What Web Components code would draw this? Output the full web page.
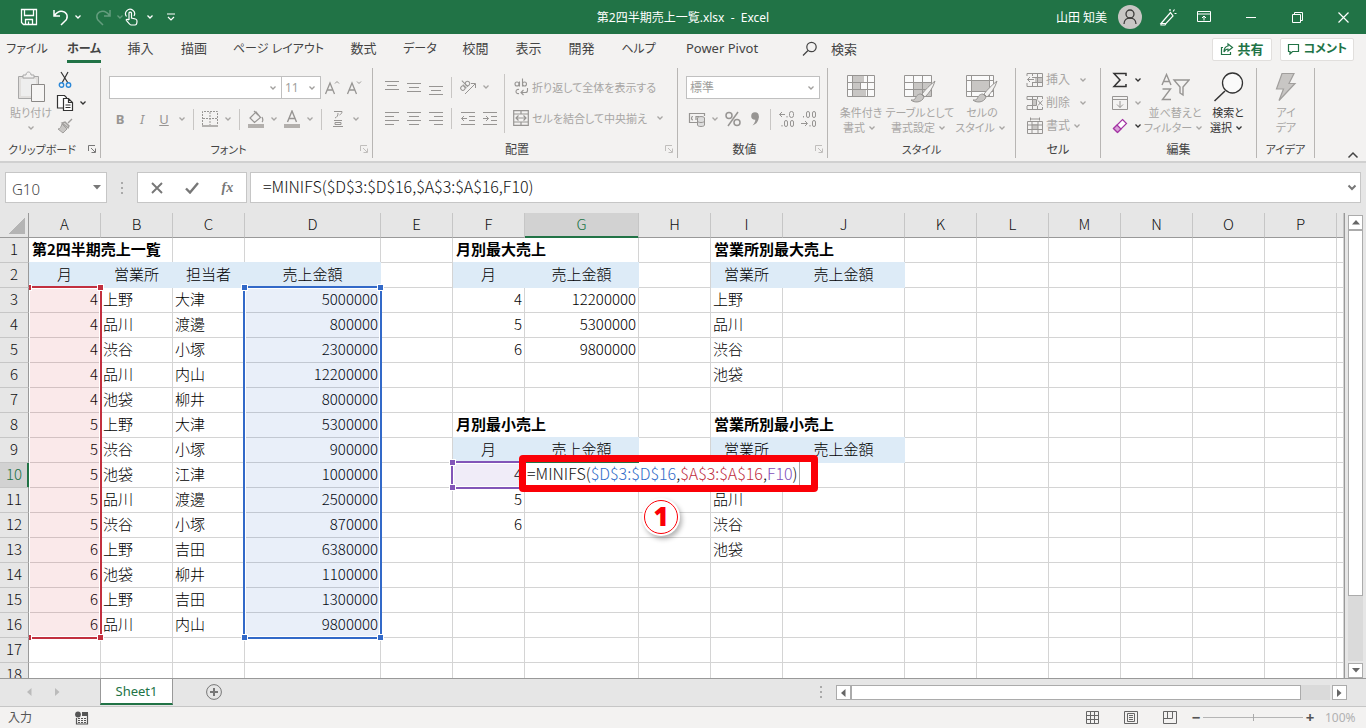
<!DOCTYPE html>
<html lang="ja">
<head>
<meta charset="utf-8">
<title>第2四半期売上一覧.xlsx - Excel</title>
<style>
html,body{margin:0;height:100%}
body{font-family:"Noto Sans","Noto Sans CJK JP",sans-serif;font-size:12px;line-height:15px;color:#444;background:#e6e6e6;overflow:hidden}
xl-app{height:100vh}
</style>
</head>
<body>
<xl-app></xl-app>
<script>
const BASE = `*{box-sizing:border-box}
button,input,select{font:inherit;color:inherit;background:none;border:0;margin:0;padding:0;outline:0;border-radius:0}
button{display:inline-flex;align-items:center;justify-content:center;white-space:nowrap}
a{color:inherit;text-decoration:none}`;

function define(name, html, setup) {
  const tpl = document.createElement('template');
  customElements.define(name, class extends HTMLElement {
    constructor() { super(); this.attachShadow({ mode: 'open' }); }
    connectedCallback() {
      if (this.shadowRoot.childNodes.length) return;
      tpl.innerHTML = `<style>${BASE}</style>` + (typeof html === 'function' ? html(this) : html);
      this.shadowRoot.append(tpl.content.cloneNode(true));
      if (setup) setup(this, this.shadowRoot);
    }
  });
}

/* ---------- icons: [width, height, markup] ---------- */
const S = 'fill="none" stroke="currentColor"';
const brush = '<path d="M33 7C28 11 23 16 20 20l3 3c4-4 8-9 10-16z" fill="#f3f2f1" stroke="#979593"/><path d="M19 20c-4 0-5 3-6 5-1 1-2 1-4 1 3 3 11 3 13-3z" fill="#c8c6c4" stroke="#979593"/>';
const ICONS = {
  save:[18,18,`<path ${S} stroke-width="1.3" d="M1.500 1.500h15v15h-13l-2-2zM4.500 1.500v6h9v-6M5.500 16.500v-5h7v5M8.500 16v-2.500"/>`],
  undo:[18,18,`<path ${S} stroke-width="1.5" d="M2 2v6h6M2.500 7.500C5 4 8 2.500 11 3.500c5 1.500 5.500 7 1.500 10L9 17"/>`],
  redo:[18,18,`<path ${S} stroke-width="1.5" d="M16 2v6h-6M15.500 7.500C13 4 10 2.500 7 3.500 2 5 1.500 10.500 5.500 13.500L9 17"/>`],
  touch:[14,18,`<path ${S} stroke-width="1.200" d="M2.500 8.500A4.500 4.500 0 1 1 10 8M5 12V5a1.300 1.300 0 0 1 2.500 0v5l4 1q1.500.4 1.500 2c0 2-.6 4-2 4H7c-1 0-2.500-2-4.500-4.500C1.500 11 4 11 5 12"/>`],
  custom:[10,8,`<path ${S} stroke-width="1.200" d="M1 1h8M2 4l3 3 3-3"/>`],
  chev:[8,6,`<path ${S} stroke-width="1.300" d="M1.500 1.500L4 4l2.500-2.500"/>`],
  user:[24,24,`<circle cx="12" cy="12" r="12" fill="#c8c6c4"/><g fill="none" stroke="#3b3a39" stroke-width="1.300"><circle cx="12" cy="9" r="4"/><path d="M6 19c0-8 12-8 12 0"/></g>`],
  pen:[18,18,`<path ${S} stroke-width="1.200" d="M2 15.500L11.500 4.500l2.500 3.500-7 7.500zM2 15.500v1.500h4l1-1.500M11 1v2M15.500 1.500L14 3.500M17.500 5.500h-2"/>`],
  disp:[14,12,`<path ${S} d="M.5.5h13v10H.5zM.5 3h13M7 9.500V5M5 7l2-2 2 2"/>`],
  min:[10,10,`<path ${S} d="M0 5.500h10"/>`],
  max:[11,11,`<path ${S} d="M.5 2.500h8v8h-8zM2.500 2.500v-2h8v8h-2"/>`],
  close:[11,11,`<path ${S} stroke-width="1.200" d="M.5.5l10 10M10.500.5l-10 10"/>`],
  search:[16,16,`<circle cx="9.500" cy="6" r="4.700" ${S} stroke-width="1.200"/><path ${S} stroke-width="1.300" d="M6 9.500L1 14.500"/>`],
  share:[14,14,`<path ${S} stroke-width="1.200" d="M3 5.500H1.500v7h9V10M8 2l4.500 3.500L8 9V7C6 7 5 8 4 10c0-3 1-5.500 4-6z"/>`],
  comment:[13,12,`<path ${S} stroke-width="1.200" d="M1.500 1.500h10v7H5.500L3 11V8.500H1.500z"/>`],
  paste:[30,32,`<path d="M2.500 5.500h20v22h-20z" fill="#e1dfdd" stroke="#a8a8a8"/><path d="M5 8h15v17H5z" fill="#eee"/><path d="M7 7V4h3c0-4 5-4 5 0h3v3z" fill="#f3f2f1" stroke="#a8a8a8"/><path d="M15.500 13.500h13v17h-13z" fill="#f6f5f4" stroke="#8a8886"/>`],
  cut:[14,18,`<path ${S} stroke-width="1.200" d="M3 1l7 11M10 1L4 12"/><circle cx="3.500" cy="14" r="2.200" fill="none" stroke="#2b88d8" stroke-width="1.400"/><circle cx="10.500" cy="14" r="2.200" fill="none" stroke="#2b88d8" stroke-width="1.400"/>`],
  copy:[18,18,`<path fill="#fff" stroke="currentColor" stroke-width="1.200" d="M1.500 1.500h7l2 2V14h-9z"/><path fill="#fff" stroke="currentColor" stroke-width="1.200" d="M7.500 4.500h5l4 4v8h-9zM12.500 4.500v4h4M9.500 11h5M9.500 13.500h5"/>`],
  painter:[16,16,`<path d="M15 1l-4 4M8 4l4 4-1 2-6-5z" fill="#d2d0ce" stroke="#a19f9d" stroke-width="1.400"/><path d="M5 6l5 5-4 4-5-4c2 0 3-2 4-5z" fill="#c8c6c4" stroke="#a19f9d"/>`],
  aup:[16,16,`<path ${S} stroke-width="1.300" d="M1.500 14L6 3l4.500 11M3 10h6"/><path ${S} d="M11 3.500l2-2 2 2"/>`],
  adn:[16,16,`<path ${S} stroke-width="1.300" d="M1.500 14L6 3l4.500 11M3 10h6"/><path ${S} d="M11 1.500l2 2 2-2"/>`],
  border:[16,16,`<path ${S} stroke="#b8b6b4" stroke-dasharray="2 1" d="M.5 14V.5h15V14M8 1v13M1 7.500h14"/><path ${S} stroke-width="1.400" d="M0 15h16"/>`],
  fill:[18,18,`<path ${S} stroke-width="1.200" d="M3 8l6-6 4.500 5.500-6 5zM7 1l4 4M15 7c1 2 1 4 0 5"/><path fill="#b3b0ad" d="M1 14h16v4H1z"/>`],
  fcolor:[18,18,`<path ${S} stroke-width="1.400" d="M4.500 12L9 1l4.500 11M6 8.500h6"/><path fill="#b3b0ad" d="M1 14h16v4H1z"/>`],
  ruby:[12,18,`<path ${S} d="M2 1.500h8c0 2-1 2.500-2.500 3.500M6 3c0 3-1 4-3 5M2 10.500h8M1 16.500h10M3 12.500h6v2H3z"/>`],
  top:[16,18,`<path ${S} d="M1 3.500h14M3 7.500h10M1 11.500h14"/>`],
  mid:[16,18,`<path ${S} d="M1 5.500h14M3 9.500h10M1 13.500h14"/>`],
  bot:[16,18,`<path ${S} d="M1 8.500h14M3 12.500h10M1 16.500h14"/>`],
  left:[16,16,`<path ${S} d="M1 2.500h14M1 6.500h9M1 10.500h14M1 14.500h9"/>`],
  center:[16,16,`<path ${S} d="M1 2.500h14M3 6.500h10M1 10.500h14M3 14.500h10"/>`],
  right:[16,16,`<path ${S} d="M1 2.500h14M6 6.500h9M1 10.500h14M6 14.500h9"/>`],
  outdent:[16,16,`<path ${S} d="M1 2.500h14M9 6.500h6M9 10.500h6M1 14.500h14M7 8.500H1.500M4 6L1.500 8.500 4 11"/>`],
  indent:[16,16,`<path ${S} d="M1 2.500h14M9 6.500h6M9 10.500h6M1 14.500h14M1 8.500h5.500M4 6l2.500 2.500L4 11"/>`],
  orient:[18,18,`<g transform="rotate(-45 6 8)" ${S}><circle cx="3" cy="8" r="2.200"/><path d="M5.500 5.500v5M7.500 2v8.500"/><circle cx="9.500" cy="8" r="2.200"/></g><path ${S} d="M6 16L16 6M12 5.500h4.500V10"/>`],
  wrap:[16,18,`<g ${S} stroke-width="1.100"><circle cx="4" cy="6" r="2"/><path d="M6.500 3.500v5M9.500.500v8"/><circle cx="11.500" cy="6" r="2"/><path d="M6 11.500c-4-1-4 5 0 4M14.500 10v2.500q0 2-2 2H8M10.500 12L8 14.500l2.500 2.500"/></g>`],
  merge:[16,16,`<path ${S} stroke-width="1.200" d="M.7.7h14.600v14.600H.7zM1 4h14M1 12h14M8 1v3M8 12v3M3 8h10M5.500 5.500L3 8l2.500 2.500M10.500 5.500L13 8l-2.500 2.500"/>`],
  money:[18,16,`<path ${S} stroke-width="1.200" d="M9 11.500H1.500v-9h15V5M5 5.500c-2 0-2 3.500 0 3.500M8 9V5.500h3"/><ellipse cx="13" cy="7" rx="3.500" ry="1.500" fill="#ddd" stroke="#979593"/><path fill="#ddd" stroke="#979593" d="M9.500 7v7c0 2 7 2 7 0V7M9.500 10c0 2 7 2 7 0"/>`],
  pct:[18,18,`<g ${S} stroke-width="1.500"><circle cx="5" cy="5.500" r="3"/><circle cx="13" cy="12.500" r="3"/><path d="M14 2L4 16"/></g>`],
  comma:[10,16,`<circle cx="5" cy="5" r="3.800" fill="currentColor"/><path fill="currentColor" d="M8.800 5c0 5-2 8-6.300 9.500C5 12 6 9 5 7z"/>`],
  inc:[18,18,`<path ${S} d="M7 4.500H1.500M4 2L1.500 4.500 4 7"/><g ${S}><rect x="11.500" y="1.500" width="4" height="6" rx="2"/><rect x="6.500" y="10.500" width="3" height="6" rx="1.500"/><rect x="12.500" y="10.500" width="3" height="6" rx="1.500"/><path d="M4 15v1.500M9 6v1.500"/></g>`],
  dec:[18,18,`<g ${S}><path d="M1 13.500h6M5 11l2.500 2.500L5 16"/><rect x="6.500" y="1.500" width="3" height="6" rx="1.500"/><rect x="12.500" y="1.500" width="3" height="6" rx="1.500"/><rect x="12.500" y="10.500" width="3" height="6" rx="1.500"/><path d="M3.500 6v1.500M10 15v1.500"/></g>`],
  cond:[30,28,`<path fill="#fafafa" stroke="#979593" d="M1.500 2.500h27v21h-27z"/><path fill="#c8c6c4" d="M7 3h11v6H7zM7 10h7v6H7zM7 17h13v6H7z"/><path fill="none" stroke="#979593" d="M6.500 3v20M14.500 10v6M21.500 3v20M2 9.500h26M2 16.500h26"/>`],
  tblfmt:[36,32,`<path fill="#fafafa" stroke="#979593" d="M2.500 4.500h27v21h-27z"/><path fill="#c8c6c4" d="M12 11h17v14H12z"/><path fill="none" stroke="#979593" d="M11.500 5v20M20.500 5v20M3 11.500h26M3 18.500h26"/><g transform="translate(0 3)">${brush}</g>`],
  cellfmt:[36,32,`<path fill="#fafafa" stroke="#979593" d="M2.500 4.500h27v21h-27z"/><path fill="#c8c6c4" d="M8 10h18v11H8z"/><path fill="none" stroke="#979593" d="M7.500 5v20M25.500 5v20M3 9.500h26M3 20.500h26"/><g transform="translate(0 3)">${brush}</g>`],
  cins:[18,16,`<path fill="#c8c6c4" d="M9 5h8v5H9z"/><path ${S} d="M1 4V1.500h15.500v13H1V11M6.500 1.500V4M11.500 1.500v13M6.500 11v3.500M6 5.500h10M6 10.500h10M8 7.500H1.500M4 5L1.500 7.500 4 10"/>`],
  cdel:[18,16,`<path fill="#c8c6c4" d="M6 5h5v5H6z"/><path ${S} d="M1 4.500V1.500h15.500V4M1 11v3.500h15.500V12M1 4.500h9.500v6H1M6.500 1.500v13M11.500 1.500v3M11.500 11v3M12 5.500l4.500 5M16.500 5.500l-4.500 5"/>`],
  cfmt:[18,18,`<path fill="#c8c6c4" d="M6 7h6v5H6z"/><path ${S} d="M1.500 4.500h15v12h-15zM6 4.500v12M12 4.500v12M2 8h14M2 12.500h14M4.500.5v3M13.500.5v3M4.500 2h9"/>`],
  sum:[16,16,`<path ${S} stroke-width="1.500" d="M14 4V1.500H2L8 8l-6 6.500h12V12"/>`],
  down:[16,14,`<path ${S} d="M.5.5h15v13H.5zM.5 3.500h15M8 5v6.500M5 8.500l3 3 3-3"/>`],
  erase:[16,16,`<path fill="#fff" stroke="#a333a3" stroke-width="1.200" d="M10.500 1.500l4 4-9 9-4-4z"/><path fill="#d9a0d9" stroke="#a333a3" stroke-width="1.200" d="M5 7l4 4-3.500 3.500-4-4z"/>`],
  sort:[30,30,`<g ${S} stroke-width="1.400"><path d="M2 13L6.500 2.500 11 13M3.500 9.500h6M2.500 17h8l-8 10.500h8.500"/><path d="M14 8h15l-6 7v8l-3-2v-6z"/></g>`],
  find:[32,32,`<circle cx="20.500" cy="12" r="10" fill="#fafafa" stroke="currentColor" stroke-width="1.300"/><path ${S} stroke-width="1.500" d="M13 20L2.500 30"/>`],
  bolt:[26,30,`<path fill="#c8c6c4" stroke="#a19f9d" stroke-width="1.200" d="M9 1.500h12l-5 10h6L6 28.500 10.500 17H3.500z"/>`],
  launch:[9,9,`<path ${S} d="M.5 6V.5H7M3 3l4 4M7.500 3.500v4h-4"/>`],
  caret:[12,8,`<path ${S} stroke-width="1.500" d="M1.500 6.500L6 2l4.500 4.500"/>`],
  tri:[8,5,`<path fill="currentColor" d="M0 0h8L4 4.500z"/>`],
  triu:[8,5,`<path fill="currentColor" d="M0 4.500h8L4 0z"/>`],
  tril:[5,8,`<path fill="currentColor" d="M4.500 0v8L0 4z"/>`],
  trir:[5,8,`<path fill="currentColor" d="M0 0v8l4.500-4z"/>`],
  dots:[3,12,`<path fill="#aaa" d="M0 0h2v2H0zM0 5h2v2H0zM0 10h2v2H0z"/>`],
  cancel:[12,12,`<path ${S} stroke-width="1.900" d="M1 1l10 10M11 1L1 11"/>`],
  ok:[14,12,`<path ${S} stroke-width="2.400" d="M1 6.500l4 4L13 1"/>`],
  bigchev:[10,7,`<path ${S} stroke-width="2" d="M1.500 1.500L5 5l3.500-3.500"/>`],
  plus:[16,16,`<circle cx="8" cy="8" r="7.400" ${S}/><path ${S} stroke-width="2" d="M4 8h8M8 4v8"/>`],
  macro:[14,14,`<path ${S} stroke-width="1.200" d="M1.500 7v6h11V3H8"/><path fill="currentColor" d="M7 1h6v4H7z"/><circle cx="3" cy="3.500" r="2.900" fill="currentColor"/><path ${S} stroke-dasharray="2 1" d="M3 7.500h8M3 9.500h8M3 11.500h8"/>`],
  vgrid:[13,13,`<path ${S} d="M.5.5h12v12H.5zM4.500.5v12M8.500.5v12M.5 4.500h12M.5 8.500h12"/>`],
  vpage:[14,13,`<path ${S} d="M.5.5h13v12h-13zM3.500 2.500h7v8h-7zM5 4.500h4M5 6.500h4M5 8.500h4"/>`],
  vbrk:[14,13,`<path ${S} d="M.5.5h13v12h-13zM4.500.5v7M.5 7.500h9M9.500.5v7"/>`]
};
define('xl-icon', el => {
  const [w, h, m] = ICONS[el.getAttribute('name')];
  return `<style>:host{display:inline-flex;flex:none}svg{display:block}</style>
  <svg width="${w}" height="${h}" viewBox="0 0 ${w} ${h}" aria-hidden="true">${m}</svg>`;
});

/* Command button: small (icon, optional text) or tall (icon above two text lines). */
define('cmd-button', el => {
  const icon = el.getAttribute('icon'), menu = el.hasAttribute('menu');
  return `<style>
  :host{display:inline-flex;flex:none;color:#a8a6a4;height:22px}
  :host([on]){color:#333}
  :host([tall]){height:72px}
  button{height:100%}
  .i{width:22px;display:flex;justify-content:center}
  .c{width:14px;display:flex;justify-content:center}
  :host(:not([on])) .i{color:#979593}
  :host([tall]) button{flex-direction:column;justify-content:flex-start;width:100%}
  :host([tall]) .i{width:auto;height:37px;align-items:center}
  :host([tall]) .l{display:flex;align-items:center;height:15px}
  </style><button aria-label="${el.getAttribute('label') || el.textContent.trim()}">
  <span class="i">${icon ? `<xl-icon name="${icon}"></xl-icon>` : '<slot name="glyph"></slot>'}</span><slot></slot>
  ${el.hasAttribute('tall') ? `<span class="l"><slot name="second"></slot>${menu ? '<span class="c"><xl-icon name="chev"></xl-icon></span>' : ''}</span>`
    : menu ? '<span class="c"><xl-icon name="chev"></xl-icon></span>' : ''}</button>`;
});

define('title-bar', `<style>
:host{display:grid;grid-template-columns:1fr auto 1fr;align-items:center;height:34px;background:#217346;color:#fff}
.q{display:flex;align-items:center;gap:6px;padding-left:18px}
.q button{min-width:22px;height:24px}
.q button.m{gap:4px;min-width:36px;justify-content:flex-end}
.q button.f{gap:8px;margin-left:-6px}
.dim{opacity:.3}
.t{white-space:pre}
.r{display:flex;align-items:center;justify-content:flex-end}
.u{gap:11px;margin-right:8px}
.s{width:36px;height:34px}.s.e{margin-right:6px}
.w{width:46px;height:34px}
</style>
<div class="q"><button aria-label="上書き保存"><xl-icon name="save"></xl-icon></button>
<button class="m" aria-label="元に戻す"><xl-icon name="undo"></xl-icon><xl-icon name="chev"></xl-icon></button>
<button class="m dim" aria-label="やり直し"><xl-icon name="redo"></xl-icon><xl-icon name="chev"></xl-icon></button>
<button class="f" aria-label="タッチ/マウス モードの切り替え"><xl-icon name="touch"></xl-icon><xl-icon name="chev"></xl-icon></button>
<button aria-label="クイック アクセス ツール バーのユーザー設定"><xl-icon name="custom"></xl-icon></button></div>
<div class="t">第2四半期売上一覧.xlsx&nbsp; -&nbsp; Excel</div>
<div class="r"><button class="u">山田 知美<xl-icon name="user"></xl-icon></button>
<button class="s" aria-label="描画"><xl-icon name="pen"></xl-icon></button><button class="s e" aria-label="リボンの表示オプション"><xl-icon name="disp"></xl-icon></button>
<button class="w" aria-label="最小化"><xl-icon name="min"></xl-icon></button><button class="w" aria-label="元に戻す"><xl-icon name="max"></xl-icon></button><button class="w" aria-label="閉じる"><xl-icon name="close"></xl-icon></button></div>`);

const TABS = ['ファイル','ホーム','挿入','描画','ページ レイアウト','数式','データ','校閲','表示','開発','ヘルプ','Power Pivot'];
define('ribbon-tabs', `<style>
:host{display:flex;align-items:center;height:30px;background:#f3f2f1;font-size:13px;line-height:16px}
nav{display:grid;grid-template-columns:54px 60px 53px 54px 115px 55px 58px 53px 53px 53px 61px 106px;justify-items:center;align-items:baseline;font-feature-settings:"palt"}
a{white-space:nowrap;padding:5px 0 3px;border-bottom:3px solid transparent}
a.k{font-size:12px}
a.on{font-weight:700;border-color:#217346}
.find{gap:13px;margin-left:27px}
.p{margin-left:auto;display:flex;gap:8px;padding-right:12px}
.p button{height:23px;padding:0 7px;gap:4px;background:#fff;border:1px solid #e1dfdd;border-radius:2px;color:#217346;font-weight:700;font-feature-settings:"palt"}
.p .k{font-size:12px;padding:0 6px}
</style><nav>${TABS.map((t,i)=>`<a href="#" class="${i==1?'on ':''}${/[ァ-ヶ]/.test(t)?'k':''}">${t}</a>`).join('')}</nav>
<button class="find"><xl-icon name="search"></xl-icon>検索</button>
<div class="p"><button><xl-icon name="share"></xl-icon>共有</button><button class="k"><xl-icon name="comment"></xl-icon>コメント</button></div>`);

define('ribbon-group', el => `<style>
:host{display:flex;flex-direction:column;flex:none;border-right:1px solid #b8b6b4;height:90px;padding-left:8px}
.b{height:75px;display:flex}
.f{display:flex;align-items:center;height:18px;color:#444;margin-left:-8px;font-size:12px;font-feature-settings:"palt"}
.k{font-size:11px}
.f span{flex:1;text-align:center}
.f button{width:16px;color:#c0bebc}
:host([active]) .f button{color:#777}
</style><div class="b"><slot></slot></div>
<div class="f${/[ァ-ヶ]{3}/.test(el.getAttribute('label'))?' k':''}"><span>${el.getAttribute('label')}</span>${el.hasAttribute('launcher')?'<button aria-label="詳細設定"><xl-icon name="launch"></xl-icon></button>':''}</div>`);

define('excel-ribbon', `<style>
:host{display:flex;background:#f3f2f1;padding-top:4px;height:99px;border-bottom:2px solid #d0d0d0;font-size:11px;font-feature-settings:"palt"}
ribbon-group .col{display:flex;flex-direction:column}
.row{display:flex;align-items:center}
.a{padding-top:8px;gap:9px}
.three{font-size:12px}
.three cmd-button{height:23px}
hr{width:1px;height:21px;border:0;background:#c8c6c4;margin:0 5px 0 4px}
hr.long{height:59px;margin:6px 5px 0 3px}
.box{display:flex;align-items:center;height:23px;background:#fff;border:1px solid #c0c0c0;color:#a19f9d;padding-right:4px}
.box+.box{margin-left:-1px}
.box input,.box select{flex:1;min-width:0;height:100%;padding-left:3px;appearance:none;font-size:12px}
b,i,u{font-size:13px}
.end{margin:auto 7px 2px auto}
</style>
<ribbon-group label="クリップボード" launcher active style="width:101px">
 <cmd-button tall menu icon="paste" style="width:46px">貼り付け</cmd-button>
 <div class="col three"><cmd-button on icon="cut" label="切り取り"></cmd-button><cmd-button on menu icon="copy" label="コピー"></cmd-button><cmd-button icon="painter" label="書式のコピー"></cmd-button></div>
</ribbon-group>
<ribbon-group label="フォント" launcher style="width:272px"><div class="col a">
 <div class="row"><div class="box" style="width:173px"><input aria-label="フォント"><xl-icon name="chev"></xl-icon></div><div class="box" style="width:40px"><input aria-label="フォント サイズ" value="11"><xl-icon name="chev"></xl-icon></div><cmd-button icon="aup" label="拡大"></cmd-button><cmd-button icon="adn" label="縮小"></cmd-button></div>
 <div class="row"><cmd-button label="太字"><b slot="glyph">B</b></cmd-button><cmd-button label="斜体"><i slot="glyph">I</i></cmd-button><cmd-button menu label="下線"><u slot="glyph">U</u></cmd-button><hr><cmd-button menu icon="border" label="罫線"></cmd-button><hr><cmd-button menu icon="fill" label="塗りつぶし"></cmd-button><cmd-button menu icon="fcolor" label="文字色"></cmd-button><hr><cmd-button menu icon="ruby" label="ふりがな"></cmd-button></div>
</div></ribbon-group>
<ribbon-group label="配置" launcher style="width:305px">
 <div class="col a"><div class="row"><cmd-button icon="top" label="上揃え"></cmd-button><cmd-button icon="mid" label="中央"></cmd-button><cmd-button icon="bot" label="下揃え"></cmd-button><hr><cmd-button menu icon="orient" label="方向"></cmd-button></div>
 <div class="row"><cmd-button icon="left" label="左揃え"></cmd-button><cmd-button icon="center" label="中央揃え"></cmd-button><cmd-button icon="right" label="右揃え"></cmd-button><hr><cmd-button icon="outdent" label="インデント減"></cmd-button><cmd-button icon="indent" label="インデント増"></cmd-button></div></div>
 <hr class="long"><div class="col a"><cmd-button icon="wrap">折り返して全体を表示する</cmd-button><cmd-button menu icon="merge">セルを結合して中央揃え&nbsp;&nbsp;</cmd-button></div>
</ribbon-group>
<ribbon-group label="数値" launcher style="width:150px"><div class="col a">
 <div class="row box" style="width:134px"><select aria-label="表示形式"><option>標準</option></select><xl-icon name="chev"></xl-icon></div>
 <div class="row"><cmd-button menu icon="money" label="通貨"></cmd-button><cmd-button icon="pct" label="パーセント"></cmd-button><cmd-button icon="comma" label="桁区切り"></cmd-button><hr><cmd-button icon="inc" label="小数点以下を増やす"></cmd-button><cmd-button icon="dec" label="小数点以下を減らす"></cmd-button></div>
</div></ribbon-group>
<ribbon-group label="スタイル" style="width:188px">
 <cmd-button tall menu icon="cond" style="width:50px">条件付き<span slot="second">書式</span></cmd-button><cmd-button tall menu icon="tblfmt" style="width:68px">テーブルとして<span slot="second">書式設定</span></cmd-button><cmd-button tall menu icon="cellfmt" style="width:56px">セルの<span slot="second">スタイル</span></cmd-button>
</ribbon-group>
<ribbon-group label="セル" style="width:85px"><div class="col three"><cmd-button menu icon="cins">挿入&nbsp;&nbsp;</cmd-button><cmd-button menu icon="cdel">削除&nbsp;&nbsp;</cmd-button><cmd-button menu icon="cfmt">書式</cmd-button></div></ribbon-group>
<ribbon-group label="編集" style="width:156px"><div class="col three"><cmd-button on menu icon="sum" label="オート SUM"></cmd-button><cmd-button menu icon="down" label="フィル"></cmd-button><cmd-button on menu icon="erase" label="クリア"></cmd-button></div>
 <cmd-button tall menu icon="sort" style="width:60px">並べ替えと<span slot="second">フィルター</span></cmd-button><cmd-button tall on menu icon="find" style="width:46px">検索と<span slot="second">選択</span></cmd-button></ribbon-group>
<ribbon-group label="アイデア" style="width:58px"><cmd-button tall icon="bolt" style="width:42px">アイ<span slot="second">デア</span></cmd-button></ribbon-group>
<button class="end" aria-label="リボンを折りたたむ"><xl-icon name="caret"></xl-icon></button>`);

define('formula-bar', `<style>
:host{display:flex;align-items:center;height:50px;padding:0 5px 1px;font-size:15px}
.b{display:flex;align-items:center;height:31px;background:#fff;border:1px solid #c6c6c6;color:#777}
.n{width:102px;padding-right:5px}.n input{flex:1;min-width:0;padding:3px 0 0 6px;color:#444;font-weight:300}
.d{width:30px;display:flex;justify-content:center}
.k{width:110px;margin-right:3px;justify-content:space-around;padding:0 1px}.k button{width:30px;height:100%}
.f{flex:1;padding-right:3px}.f input{flex:1;padding:0 0 3px 12px;color:#111;font:300 16px "Noto Sans CJK JP",sans-serif}
i{font:italic 700 14px "Liberation Serif",serif}
</style><div class="b n"><input aria-label="名前ボックス" value="G10"><xl-icon name="tri"></xl-icon></div><div class="d"><xl-icon name="dots"></xl-icon></div>
<div class="b k"><button aria-label="キャンセル"><xl-icon name="cancel"></xl-icon></button><button aria-label="入力"><xl-icon name="ok"></xl-icon></button><button aria-label="関数の挿入"><i>fx</i></button></div>
<div class="b f"><input aria-label="数式バー" value="=MINIFS($D$3:$D$16,$A$3:$A$16,F10)"><xl-icon name="bigchev"></xl-icon></div>`);

/* ---------- worksheet ---------- */
const COLS = {A:72,B:72,C:72,D:136,E:72,F:72,G:114,H:72,I:72,J:122,K:72,L:72,M:72,N:72,O:72,P:72};
const CELLS = {A1:'第2四半期売上一覧',F1:'月別最大売上',I1:'営業所別最大売上',F8:'月別最小売上',I8:'営業所別最小売上',
 A2:'月',B2:'営業所',C2:'担当者',D2:'売上金額',F2:'月',G2:'売上金額',I2:'営業所',J2:'売上金額',F9:'月',G9:'売上金額',I9:'営業所',J9:'売上金額',
 F3:4,F4:5,F5:6,G3:12200000,G4:5300000,G5:9800000,F10:4,F11:5,F12:6,
 I3:'上野',I4:'品川',I5:'渋谷',I6:'池袋',I11:'品川',I12:'渋谷',I13:'池袋'};
[[4,'上野','大津',5000000],[4,'品川','渡邊',800000],[4,'渋谷','小塚',2300000],[4,'品川','内山',12200000],[4,'池袋','柳井',8000000],
 [5,'上野','大津',5300000],[5,'渋谷','小塚',900000],[5,'池袋','江津',1000000],[5,'品川','渡邊',2500000],[5,'渋谷','小塚',870000],
 [6,'上野','吉田',6380000],[6,'池袋','柳井',1100000],[6,'上野','吉田',1300000],[6,'品川','内山',9800000]]
 .forEach((r,i)=>r.forEach((v,c)=>CELLS['ABCD'[c]+(i+3)]=v));
const TITLES = ['A1','F1','I1','F8','I8'];
function bodyRow(n) {
  let out = `<tr><th${n==10?' class="sel"':''}>${n}</th>`, skip = false;
  for (const c of Object.keys(COLS)) {
    if (skip) { skip = false; continue; }
    const k = c + n, v = CELLS[k] ?? '';
    if (TITLES.includes(k)) { out += `<td colspan="2" class="ttl">${v}</td>`; skip = true; continue; }
    const head = v !== '' && (n == 2 || (n == 9 && c > 'E'));
    out += `<td${head?' class="hd"':typeof v==='number'?' class="num"':''}>${v}</td>`;
  }
  return out + '<td></td></tr>';
}

/* Coloured outline round a referenced range; placed on the overlay grid. */
define('range-mark', `<style>
:host{display:block;position:relative;margin:-2px -1px -1px -2px;border:2px solid var(--c);background:var(--f);box-shadow:inset 0 0 0 1px #fff}
i{position:absolute;width:7px;height:7px;background:var(--c);border:1px solid #fff}
i:nth-of-type(1){left:-4px;top:-4px}i:nth-of-type(2){right:-4px;top:-4px}i:nth-of-type(3){left:-4px;bottom:-4px}i:nth-of-type(4){right:-4px;bottom:-4px}
</style><i></i><i></i><i></i><i></i>`);

define('cell-editor', `<style>
:host{display:flex;align-items:center;width:299px;margin:-8px 0 -4px -6px;border:7px solid #fb0007;border-radius:4px;background:linear-gradient(#217346,#217346) 0 0/113px 1px no-repeat #fff;z-index:2}
div{outline:0;white-space:nowrap;padding:0 1px 1px;color:#111;border-right:1px solid #aaa;font-size:16px}
.b{color:#2f6bc9}.r{color:#c02f3f}.p{color:#7f50ba}
</style><div role="textbox" contenteditable="true">=MINIFS(<span class="b">$D$3:$D$16</span>,<span class="r">$A$3:$A$16</span>,<span class="p">F10</span>)</div>`);

define('step-badge', `<style>
:host{display:flex;align-items:center;justify-content:center;width:38px;height:38px;border-radius:50%;background:#fff;box-shadow:2px 3px 5px rgba(0,0,0,.3);z-index:3;padding:2px}
span{flex:1;height:34px;border:1px solid #fb0007;border-radius:50%;color:#fb0007;font:800 26px/31px "Open Sans","Noto Sans",sans-serif;text-align:center}
</style><span><slot></slot></span>`);

define('work-sheet', `<style>
:host{display:block;position:relative;flex:1;min-width:0;overflow:hidden;background:#fff;border-right:1px solid #999;font-family:"Noto Sans CJK JP",sans-serif;font-size:15px;line-height:22px;font-weight:300;color:#000}
table{width:100%;table-layout:fixed;border-collapse:separate;border-spacing:0}
th{height:25px;padding:0 0 2px;background:#e6e6e6;border:0 solid #c6c6c6;border-width:0 1px 1px 0;font-weight:300;color:#111}
thead th{border-bottom-color:#999}
tbody th,thead th:first-child{border-right-color:#999}
thead th:first-child{background:linear-gradient(135deg,#e6e6e6 0 50%,#b4b4b4 50%) 8px 4px/17px 17px no-repeat #e6e6e6}
th.sel{background:#d2d2d2;color:#217346}
thead th.sel{box-shadow:inset 0 -1px #217346;border-bottom-color:#217346}
tbody th.sel{box-shadow:inset -1px 0 #217346;border-right-color:#217346}
td{height:25px;padding:0 2px 2px;border:0 solid #d4d4d4;border-width:0 1px 1px 0;white-space:nowrap}
.num{text-align:right}
.ttl{font-weight:700;padding-left:3px}
.hd{text-align:center;background:#ddebf7;border-color:#ddebf7;box-shadow:0 -1px #ddebf7}
.over{position:absolute;inset:0 0 0 29px;overflow:hidden;display:grid;grid-template-columns:${Object.values(COLS).map(w=>w+'px').join(' ')};grid-auto-rows:25px}
.ra{--c:#c2303f;--f:rgba(205,40,45,.1);grid-area:4/1/18/2}
.rd{--c:#3269c8;--f:rgba(40,100,200,.1);grid-area:4/4/18/5}
.rf{--c:#8255b8;--f:rgba(120,80,190,.11);grid-area:11/6/12/7}
cell-editor{grid-area:11/7/12/10}
step-badge{grid-area:12/8/14/9;margin:10px 0 0 3px}
</style><table><colgroup><col style="width:29px">${Object.values(COLS).map(w=>`<col style="width:${w}px">`).join('')}<col></colgroup>
<thead><tr><th></th>${Object.keys(COLS).map(c=>`<th${c=='G'?' class="sel"':''}>${c}</th>`).join('')}<th></th></tr></thead>
<tbody>${Array.from({length:18},(_,i)=>bodyRow(i+1)).join('')}</tbody></table>
<div class="over"><range-mark class="ra"></range-mark><range-mark class="rd"></range-mark><range-mark class="rf"></range-mark><cell-editor></cell-editor><step-badge>1</step-badge></div>`);

define('scroll-bar', el => { const v = el.hasAttribute('vertical'); return `<style>
:host{display:flex;flex-direction:${v?'column':'row'};${v?'width':'height'}:15px;color:#666}
button{flex:none;width:15px;height:15px;background:#fff;border:1px solid #ababab}
.t{flex:1;display:flex;flex-direction:inherit;background:#dadada;margin-${v?'bottom':'right'}:2px}
.h{flex:0 0 ${v?'85%':'94%'};background:#fff;border:1px solid #ababab}
</style><button aria-label="前へ"><xl-icon name="${v?'triu':'tril'}"></xl-icon></button><div class="t"><div class="h"></div></div><button aria-label="次へ"><xl-icon name="${v?'tri':'trir'}"></xl-icon></button>`; });

define('sheet-tabs', `<style>
:host{display:flex;align-items:flex-start;height:28px;border-top:1px solid #999;background:#e6e6e6}
.l{width:60%;display:flex;align-items:center}
.nv{width:28px;height:26px;color:#bbb}
.pad{width:15px}.gap{width:29px}
a{width:73px;height:26px;margin-top:-1px;background:#fff;border:1px solid #999;border-width:0 1px 2px;border-bottom-color:#217346;color:#217346;font-size:13px;line-height:24px;text-align:center}
.add{margin-left:33px;color:#777}
.d{padding:7px 13px 0 0;width:16px}
scroll-bar{flex:1;margin:6px 19px 0 0}
</style><div class="l"><span class="pad"></span><button class="nv" aria-label="前のシート"><xl-icon name="tril"></xl-icon></button><button class="nv" aria-label="次のシート"><xl-icon name="trir"></xl-icon></button><span class="gap"></span><a href="#">Sheet1</a><button class="add" aria-label="新しいシート"><xl-icon name="plus"></xl-icon></button></div>
<span class="d"><xl-icon name="dots"></xl-icon></span><scroll-bar></scroll-bar>`);

define('status-bar', `<style>
:host{display:flex;align-items:center;height:22px;background:#f3f2f1;border-top:1px solid #c6c6c6;padding:0 8px;color:#555}
.m{margin-left:43px}.v{margin-left:auto;display:flex;gap:25px;color:#666}
.z{width:14px;font-weight:700;font-size:15px;margin-left:12px;color:#555}.z+input+.z{margin-left:0}
input{width:100px;height:12px;appearance:none;background:linear-gradient(#aaa,#aaa) 50% 50%/1px 5px no-repeat,linear-gradient(#b5b5b5,#b5b5b5) 0 50%/100% 1px no-repeat}
input::-webkit-slider-thumb{appearance:none;width:1px;height:7px;background:#aaa}
output{margin-left:8px;min-width:33px;color:#b1b1b1}
</style><span>入力</span><button class="m" aria-label="マクロの記録"><xl-icon name="macro"></xl-icon></button>
<div class="v"><button aria-label="標準"><xl-icon name="vgrid"></xl-icon></button><button aria-label="ページ レイアウト"><xl-icon name="vpage"></xl-icon></button><button aria-label="改ページ プレビュー"><xl-icon name="vbrk"></xl-icon></button></div>
<button class="z" aria-label="縮小">−</button><input type="range" aria-label="ズーム" value="50"><button class="z" aria-label="拡大">+</button><output>100%</output>`);

define('xl-app', `<style>
:host{display:flex;flex-direction:column}
main{flex:1;min-height:0;display:flex}
scroll-bar{margin:2px 3px 0}
</style><title-bar></title-bar><ribbon-tabs></ribbon-tabs><excel-ribbon></excel-ribbon><formula-bar></formula-bar>
<main><work-sheet></work-sheet><scroll-bar vertical></scroll-bar></main><sheet-tabs></sheet-tabs><status-bar></status-bar>`);
</script>
</body>
</html>
